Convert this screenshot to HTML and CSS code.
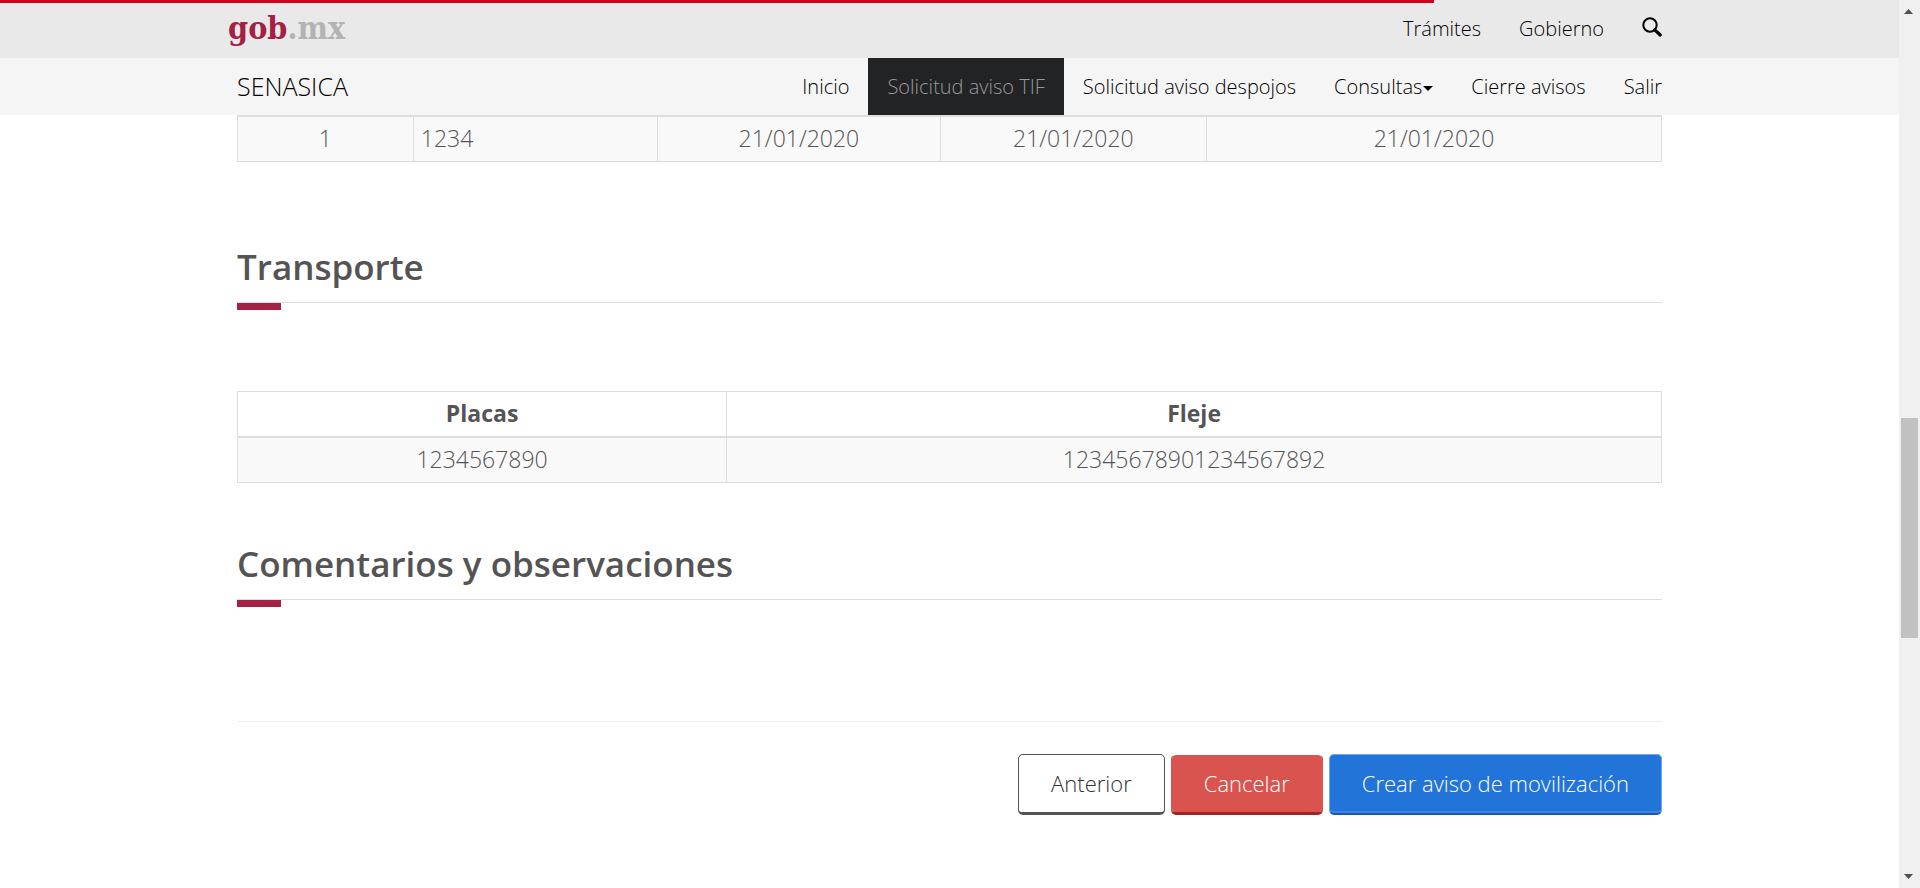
FILE: index.html
```html
<!DOCTYPE html>
<html lang="es">
<head>
<meta charset="utf-8">
<title>SENASICA - Solicitud aviso TIF</title>
<link rel="stylesheet" href="styles.css">
</head>
<body>
<div class="window">
  <div class="page">
    <header class="header">
      <div class="progress"></div>
      <div class="topbar">
        <div class="container bar">
          <a class="logo" href="#"><span class="logo-gob">gob</span><span class="logo-mx">.mx</span></a>
          <nav class="menu menu-top">
            <a class="menu-link" href="#">Trámites</a>
            <a class="menu-link" href="#">Gobierno</a>
            <a class="menu-link menu-search" href="#" aria-label="Buscar">
              <svg class="search-icon" viewBox="0 0 20 20" width="20" height="20" aria-hidden="true">
                <circle cx="8" cy="8" r="6.7" fill="none" stroke="#000" stroke-width="2"/>
                <path d="M12.8 12.8L18.2 18" fill="none" stroke="#000" stroke-width="3.2" stroke-linecap="round"/>
              </svg>
            </a>
          </nav>
        </div>
      </div>
      <div class="subbar">
        <div class="container bar">
          <a class="brand" href="#">SENASICA</a>
          <nav class="menu">
            <a class="menu-link" href="#">Inicio</a>
            <a class="menu-link menu-active" href="#">Solicitud aviso TIF</a>
            <a class="menu-link" href="#">Solicitud aviso despojos</a>
            <a class="menu-link" href="#">Consultas<span class="caret"></span></a>
            <a class="menu-link" href="#">Cierre avisos</a>
            <a class="menu-link" href="#">Salir</a>
          </nav>
        </div>
      </div>
    </header>
    <main class="container content">
      <table class="table table-dates">
        <colgroup><col class="col-number"><col class="col-lot"><col class="col-date-a"><col class="col-date-b"><col></colgroup>
        <tbody>
          <tr><td>1</td><td class="left">1234</td><td>21/01/2020</td><td>21/01/2020</td><td>21/01/2020</td></tr>
        </tbody>
      </table>
      <section class="section">
        <h2 class="title">Transporte</h2>
        <table class="table table-transport">
          <colgroup><col class="col-plates"><col></colgroup>
          <thead><tr><th>Placas</th><th>Fleje</th></tr></thead>
          <tbody><tr><td>1234567890</td><td>12345678901234567892</td></tr></tbody>
        </table>
      </section>
      <section class="section section-comments">
        <h2 class="title">Comentarios y observaciones</h2>
      </section>
      <div class="actions">
        <button class="btn btn-default" type="button">Anterior</button>
        <button class="btn btn-danger" type="button">Cancelar</button>
        <button class="btn btn-primary" type="button">Crear aviso de movilización</button>
      </div>
    </main>
  </div>
  <div class="scrollbar" aria-hidden="true">
    <svg class="scroll-arrow" viewBox="0 0 21 21" width="21" height="21"><path d="M5 14L9.500 9L14 14Z" fill="#505050"/></svg>
    <div class="track"><div class="thumb"></div></div>
    <svg class="scroll-arrow" viewBox="0 0 21 21" width="21" height="21"><path d="M5 7L9.500 12L14 7Z" fill="#505050"/></svg>
  </div>
</div>
</body>
</html>
```

FILE: styles.css
```css
* { box-sizing: border-box; }
body {
  margin: 0;
  background: #fff;
  color: #545454;
  font-family: "Open Sans", "Noto Sans", sans-serif;
  font-weight: 300;
  font-size: 23px;
  line-height: 32px;
}
a { color: inherit; text-decoration: none; }
.window { display: flex; height: 100vh; overflow: hidden; }
.page { flex: 1; min-width: 0; position: relative; }
.container { width: 100%; max-width: 1463px; margin: 0 auto; padding: 0 19px; }

.progress { position: absolute; top: 0; left: 0; width: 75.5%; height: 3px; background: #d0021b; }
.topbar { background: #e9e9e9; height: 58px; }
.subbar { background: #f5f5f5; height: 57px; }
.bar { display: flex; justify-content: space-between; height: 100%; }
.logo {
  align-self: center;
  margin-left: -9px;
  padding-bottom: 2px;
  font-family: "DejaVu Serif Condensed", "DejaVu Serif", serif;
  font-weight: 700;
  font-size: 32px;
  line-height: 40px;
}
.logo-gob { color: #a42145; }
.logo-mx { color: #b3b3b3; }
.brand { align-self: center; padding-bottom: 2px; color: #000; font-size: 25px; }
.menu { display: flex; margin-right: -19px; color: #000; font-size: 20px; }
.menu-link { display: flex; align-items: center; padding: 0 19px; }
.menu-active { background: #222325; color: #999; }
.menu-search { padding-bottom: 4px; }
.caret { border: 5px solid transparent; border-top-color: #000; border-bottom: 0; margin-top: 4px; margin-left: 1px; }

.table { width: 100%; border-collapse: collapse; table-layout: fixed; border: 1px solid #ddd; }
.table td, .table th { height: 45px; padding: 5px 7px 7px; border: 1px solid #ddd; text-align: center; line-height: 32px; }
.table th { font-weight: 700; border-bottom-width: 2px; }
.table td { background: #f9f9f9; }
.table .left { text-align: left; }
.table-dates { border-top-width: 2px; }
.table-dates td { border-top-width: 2px; }
.col-number { width: 12.35%; }
.col-lot { width: 17.15%; }
.col-date-a { width: 19.85%; }
.col-date-b { width: 18.7%; }
.col-plates { width: 34.35%; }

.section { padding-top: 76px; }
.section-comments { padding-top: 52px; }
.title {
  position: relative;
  margin: 0;
  padding: 3px 0 9px;
  border-bottom: 1px solid #ddd;
  font-size: 35px;
  font-weight: 600;
  line-height: 52px;
}
.title::after { content: ""; position: absolute; left: 0; top: 100%; margin-top: 1px; width: 44px; height: 7px; background: #a42145; }
.table-transport { margin-top: 88px; }

.actions { display: flex; justify-content: flex-end; gap: 6px; margin-top: 121px; padding-top: 32px; border-top: 1px solid #eee; }
.btn {
  height: 61px;
  padding: 0 32px 2px;
  border: 1px solid;
  border-radius: 5px;
  font: inherit;
  font-size: 22px;
}
.btn-default { background: #fff; color: #333; border-color: #545454; border-bottom-width: 3px; }
.btn-danger { background: #d9534f; color: #fff; border-color: #fff #d9534f #a02622; border-width: 1px 1px 3px; background-clip: padding-box; }
.btn-primary { background: #2274d8; color: #fff; border-color: #6ea3f5 #6ea3f5 #1c58a8; border-bottom-width: 2px; box-shadow: inset 0 -2px #3b83ea; }

.scrollbar { display: flex; flex-direction: column; width: 21px; background: #f0f0f0; }
.scroll-arrow { display: block; flex: none; }
.track { flex: 1; display: grid; grid-template-rows: 397fr 220fr 229fr; padding: 0 2px; }
.thumb { grid-row: 2; background: #c1c1c1; }
```
